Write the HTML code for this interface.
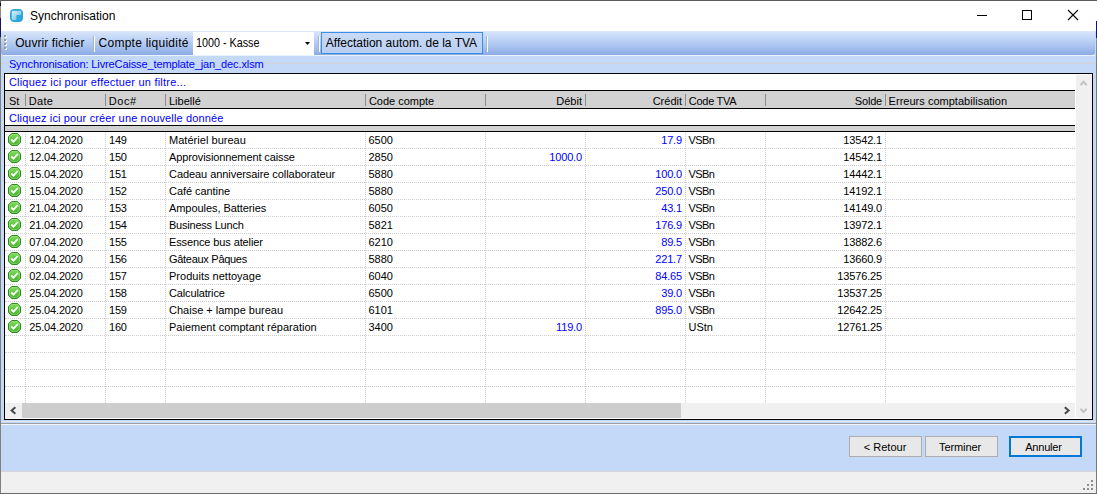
<!DOCTYPE html>
<html><head><meta charset="utf-8"><title>Synchronisation</title>
<style>
*{box-sizing:border-box}
html,body{margin:0;padding:0}
body{width:1097px;height:494px;overflow:hidden;position:relative;background:#fff;font-family:"Liberation Sans",sans-serif;font-size:11px;color:#000}
.a{position:absolute}
.t{position:absolute;white-space:nowrap;height:16px;line-height:16px}
.s12{font-size:12px}
.blue{color:#0000ff}
.hl{position:absolute;left:5px;width:1070px;height:0;border-top:1px dotted #cdcdcd}
.vl{position:absolute;top:132px;width:0;height:271px;border-left:1px dotted #cdcdcd}
.ic{position:absolute;left:8px}
.hs{position:absolute;top:94px;width:1px;height:12px;background:#8c8c8c}
.btn{position:absolute;top:436px;height:21px;border:1px solid #adadad;background:#e8e8e8}
.sep{position:absolute;top:36px;width:2px;height:16px;background:linear-gradient(90deg,#a9b4c8 50%,#fafcff 50%)}
</style></head><body>
<svg width="0" height="0" style="position:absolute"><defs><linearGradient id="gg" x1="0" y1="0" x2="0" y2="1"><stop offset="0" stop-color="#84dc62"/><stop offset=".5" stop-color="#5fc843"/><stop offset="1" stop-color="#49b030"/></linearGradient></defs></svg>
<!-- window frame -->
<div class="a" style="left:0;top:0;width:1097px;height:1px;background:#5c5c5c"></div>
<div class="a" style="left:0;top:0;width:1px;height:494px;background:linear-gradient(#606060 0,#606060 3px,#101010 3px,#101010 6px,#8a8a8a 6px,#8a8a8a 18px,#15155c 18px,#15155c 37px,#808080 37px)"></div>
<div class="a" style="left:1096px;top:1px;width:1px;height:493px;background:linear-gradient(#fff 0,#fff 20px,#15155c 20px,#15155c 37px,#8a94a8 37px,#7a7a7a 60px)"></div>
<div class="a" style="left:0;top:493px;width:1097px;height:1px;background:#6b6b6b"></div>
<!-- title bar -->
<svg class="a" style="left:10.400px;top:8.500px" width="13" height="13" viewBox="0 0 13 13"><defs><linearGradient id="g1" x1="0" y1="0" x2="1" y2="1"><stop offset="0" stop-color="#f2fbfe"/><stop offset=".5" stop-color="#a5dcf2"/><stop offset="1" stop-color="#48b4e2"/></linearGradient></defs><rect x=".5" y=".5" width="12" height="12" rx="3.200" fill="#1f9fd8" stroke="#2ba6dc"/><path d="M1.700 3q0-1.300 1.300-1.300h7q1.300 0 1.300 1.300v3.200h-4.600v5.100h-3.700q-1.300 0-1.300-1.300z" fill="url(#g1)" opacity=".92"/><path d="M6.700 6.200h4.600v3.800q0 1.300-1.300 1.300h-3.300z" fill="#2fa8de"/></svg>
<svg class="a" style="left:960px;top:0" width="137" height="30" viewBox="960 0 137 30"><path d="M977 15.500h10" stroke="#000" stroke-width="1"/><rect x="1022.500" y="10.500" width="9" height="9" fill="none" stroke="#000"/><path d="M1068 10l10 10M1078 10l-10 10" stroke="#000" stroke-width="1.100"/></svg>
<!-- toolbar -->
<div class="a" style="left:1px;top:31px;width:1095px;height:24px;background:#c4d8f8"></div>
<div class="a" style="left:1px;top:31px;width:1094px;height:24px;border-radius:0 0 3px 3px;background:linear-gradient(#dbe7fb 0%,#c6d9f7 25%,#a9c3ef 65%,#8caae3 100%)"></div>
<div class="a" style="left:1px;top:55px;width:1095px;height:18px;background:#c4d8f8"></div>
<div class="a" style="left:3px;top:55px;width:1092px;height:1px;background:#ecf2fd"></div>
<div class="a" style="left:1px;top:63px;width:7px;height:1px;background:#d3d3d6"></div>
<div class="a" style="left:266px;top:63px;width:829px;height:1px;background:#d3d3d6"></div>

<div class="a" style="left:5px;top:36px;width:2px;height:2px;background:#fff"></div><div class="a" style="left:4px;top:35px;width:2px;height:2px;background:#a09a94"></div>
<div class="a" style="left:5px;top:40px;width:2px;height:2px;background:#fff"></div><div class="a" style="left:4px;top:39px;width:2px;height:2px;background:#a09a94"></div>
<div class="a" style="left:5px;top:44px;width:2px;height:2px;background:#fff"></div><div class="a" style="left:4px;top:43px;width:2px;height:2px;background:#a09a94"></div>
<div class="a" style="left:5px;top:48px;width:2px;height:2px;background:#fff"></div><div class="a" style="left:4px;top:47px;width:2px;height:2px;background:#a09a94"></div>
<div id="tb1" class="t s12" style="top:35px;left:15.20px;letter-spacing:0.091px;">Ouvrir fichier</div>
<div class="sep" style="left:93px"></div>
<div id="tb2" class="t s12" style="top:35px;left:98.60px;letter-spacing:0.250px;">Compte liquidité</div>
<div class="a" style="left:193px;top:32px;width:121px;height:23px;background:#fff"></div>
<div id="tb3" class="t s12" style="top:35px;left:196.10px;transform:scaleX(.898);transform-origin:0 0;">1000 - Kasse</div>
<svg class="a" style="left:304px;top:41px" width="7" height="5" viewBox="0 0 7 5"><path d="M1 1h5l-2.500 3z" fill="#000"/></svg>
<div class="sep" style="left:318px"></div>
<div class="a" style="left:321px;top:32px;width:162px;height:22px;border:1px solid #3a8ee6;background:linear-gradient(#c9dbf7,#b9cef1)"></div>
<div id="tb4" class="t s12" style="top:35px;left:325.80px;letter-spacing:-0.005px;">Affectation autom. de la TVA</div>
<div class="sep" style="left:486px"></div>
<div id="ttl" class="t s12" style="top:8px;left:30.00px;">Synchronisation</div>
<div id="sync" class="t blue" style="top:55.5px;left:8.90px;letter-spacing:-0.116px;">Synchronisation: LivreCaisse_template_jan_dec.xlsm</div>
<div class="a" style="left:1px;top:73px;width:1095px;height:350px;background:#c4d8f8"></div>
<div class="a" style="left:4px;top:73px;width:1089px;height:347px;border:1px solid #000;background:#fff"></div>
<div class="a" style="left:5px;top:90px;width:1070px;height:19px;background:#d2d2d2;border-top:1px solid #000;border-bottom:1px solid #000"></div>
<div class="a" style="left:5px;top:125px;width:1070px;height:7px;background:#d2d2d2;border-top:1px solid #000;border-bottom:1px solid #000"></div>

<div id="flt" class="t blue" style="top:74px;left:8.90px;letter-spacing:0.211px;">Cliquez ici pour effectuer un filtre...</div>
<div id="new" class="t blue" style="top:110px;left:8.90px;letter-spacing:0.146px;">Cliquez ici pour créer une nouvelle donnée</div>
<div id="h0" class="t " style="top:93px;left:9.00px;">St</div>
<div id="h1" class="t " style="top:93px;left:28.70px;letter-spacing:0.350px;">Date</div>
<div id="h2" class="t " style="top:93px;left:108.80px;letter-spacing:0.571px;">Doc#</div>
<div id="h3" class="t " style="top:93px;left:169.00px;">Libellé</div>
<div id="h4" class="t " style="top:93px;left:368.90px;letter-spacing:-0.014px;">Code compte</div>
<div id="h5" class="t " style="top:93px;left:282.00px;width:300px;text-align:right;">Débit</div>
<div id="h6" class="t " style="top:93px;left:382.00px;width:300px;text-align:right;">Crédit</div>
<div id="h7" class="t " style="top:93px;left:688.80px;letter-spacing:-0.276px;">Code TVA</div>
<div id="h8" class="t " style="top:93px;left:582.00px;width:300px;text-align:right;letter-spacing:-.2px;">Solde</div>
<div id="h9" class="t " style="top:93px;left:888.60px;letter-spacing:0.022px;">Erreurs comptabilisation</div>
<div class="hs" style="left:25px"></div>
<div class="hs" style="left:105px"></div>
<div class="hs" style="left:165px"></div>
<div class="hs" style="left:365px"></div>
<div class="hs" style="left:485px"></div>
<div class="hs" style="left:585px"></div>
<div class="hs" style="left:685px"></div>
<div class="hs" style="left:765px"></div>
<div class="hs" style="left:885px"></div>
<div class="vl" style="left:25px"></div>
<div class="vl" style="left:105px"></div>
<div class="vl" style="left:165px"></div>
<div class="vl" style="left:365px"></div>
<div class="vl" style="left:485px"></div>
<div class="vl" style="left:585px"></div>
<div class="vl" style="left:685px"></div>
<div class="vl" style="left:765px"></div>
<div class="vl" style="left:885px"></div>
<div class="hl" style="top:148px"></div>
<svg class="ic" style="top:133px" width="13" height="13" viewBox="0 0 13 13"><path d="M3.700 .5h5.600l3.200 3.200v5.600l-3.200 3.200h-5.600l-3.200-3.200v-5.600z" fill="url(#gg)" stroke="#2f8a20" stroke-width="1" stroke-linejoin="round"/><path d="M4.100 1.500h4.800l2.600 2.600v4.800l-2.600 2.600h-4.800l-2.600-2.600v-4.800z" fill="none" stroke="#9be77e" stroke-opacity=".55" stroke-width="1"/><path d="M3.200 6.500l2.300 2.200 4.300-4.700" fill="none" stroke="#fff" stroke-width="1.800"/></svg>
<div id="d0" class="t " style="top:132px;left:29.30px;letter-spacing:-0.162px;">12.04.2020</div>
<div id="n0" class="t " style="top:132px;left:109.10px;letter-spacing:-0.230px;">149</div>
<div id="l0" class="t " style="top:132px;left:169.00px;letter-spacing:0.033px;">Matériel bureau</div>
<div id="c0" class="t " style="top:132px;left:368.60px;letter-spacing:-0.095px;">6500</div>
<div id="cr0" class="t blue" style="top:132px;left:382.00px;width:300px;text-align:right;letter-spacing:-.15px;">17.9</div>
<div id="tv0" class="t " style="top:132px;left:688.60px;letter-spacing:-0.614px;">VSBn</div>
<div id="s0" class="t " style="top:132px;left:582.00px;width:300px;text-align:right;letter-spacing:-.15px;">13542.1</div>
<div class="hl" style="top:165px"></div>
<svg class="ic" style="top:150px" width="13" height="13" viewBox="0 0 13 13"><path d="M3.700 .5h5.600l3.200 3.200v5.600l-3.200 3.200h-5.600l-3.200-3.200v-5.600z" fill="url(#gg)" stroke="#2f8a20" stroke-width="1" stroke-linejoin="round"/><path d="M4.100 1.500h4.800l2.600 2.600v4.800l-2.600 2.600h-4.800l-2.600-2.600v-4.800z" fill="none" stroke="#9be77e" stroke-opacity=".55" stroke-width="1"/><path d="M3.200 6.500l2.300 2.200 4.300-4.700" fill="none" stroke="#fff" stroke-width="1.800"/></svg>
<div id="d1" class="t " style="top:149px;left:29.30px;letter-spacing:-0.162px;">12.04.2020</div>
<div id="n1" class="t " style="top:149px;left:109.10px;letter-spacing:-0.230px;">150</div>
<div id="l1" class="t " style="top:149px;left:169.00px;letter-spacing:-0.105px;">Approvisionnement caisse</div>
<div id="c1" class="t " style="top:149px;left:368.60px;letter-spacing:-0.095px;">2850</div>
<div id="db1" class="t blue" style="top:149px;left:282.00px;width:300px;text-align:right;letter-spacing:-.15px;">1000.0</div>
<div id="s1" class="t " style="top:149px;left:582.00px;width:300px;text-align:right;letter-spacing:-.15px;">14542.1</div>
<div class="hl" style="top:182px"></div>
<svg class="ic" style="top:167px" width="13" height="13" viewBox="0 0 13 13"><path d="M3.700 .5h5.600l3.200 3.200v5.600l-3.200 3.200h-5.600l-3.200-3.200v-5.600z" fill="url(#gg)" stroke="#2f8a20" stroke-width="1" stroke-linejoin="round"/><path d="M4.100 1.500h4.800l2.600 2.600v4.800l-2.600 2.600h-4.800l-2.600-2.600v-4.800z" fill="none" stroke="#9be77e" stroke-opacity=".55" stroke-width="1"/><path d="M3.200 6.500l2.300 2.200 4.300-4.700" fill="none" stroke="#fff" stroke-width="1.800"/></svg>
<div id="d2" class="t " style="top:166px;left:29.30px;letter-spacing:-0.162px;">15.04.2020</div>
<div id="n2" class="t " style="top:166px;left:109.10px;letter-spacing:-0.230px;">151</div>
<div id="l2" class="t " style="top:166px;left:169.00px;letter-spacing:-0.062px;">Cadeau anniversaire collaborateur</div>
<div id="c2" class="t " style="top:166px;left:368.60px;letter-spacing:-0.095px;">5880</div>
<div id="cr2" class="t blue" style="top:166px;left:382.00px;width:300px;text-align:right;letter-spacing:-.15px;">100.0</div>
<div id="tv2" class="t " style="top:166px;left:688.60px;letter-spacing:-0.614px;">VSBn</div>
<div id="s2" class="t " style="top:166px;left:582.00px;width:300px;text-align:right;letter-spacing:-.15px;">14442.1</div>
<div class="hl" style="top:199px"></div>
<svg class="ic" style="top:184px" width="13" height="13" viewBox="0 0 13 13"><path d="M3.700 .5h5.600l3.200 3.200v5.600l-3.200 3.200h-5.600l-3.200-3.200v-5.600z" fill="url(#gg)" stroke="#2f8a20" stroke-width="1" stroke-linejoin="round"/><path d="M4.100 1.500h4.800l2.600 2.600v4.800l-2.600 2.600h-4.800l-2.600-2.600v-4.800z" fill="none" stroke="#9be77e" stroke-opacity=".55" stroke-width="1"/><path d="M3.200 6.500l2.300 2.200 4.300-4.700" fill="none" stroke="#fff" stroke-width="1.800"/></svg>
<div id="d3" class="t " style="top:183px;left:29.30px;letter-spacing:-0.162px;">15.04.2020</div>
<div id="n3" class="t " style="top:183px;left:109.10px;letter-spacing:-0.230px;">152</div>
<div id="l3" class="t " style="top:183px;left:169.00px;letter-spacing:-0.051px;">Café cantine</div>
<div id="c3" class="t " style="top:183px;left:368.60px;letter-spacing:-0.095px;">5880</div>
<div id="cr3" class="t blue" style="top:183px;left:382.00px;width:300px;text-align:right;letter-spacing:-.15px;">250.0</div>
<div id="tv3" class="t " style="top:183px;left:688.60px;letter-spacing:-0.614px;">VSBn</div>
<div id="s3" class="t " style="top:183px;left:582.00px;width:300px;text-align:right;letter-spacing:-.15px;">14192.1</div>
<div class="hl" style="top:216px"></div>
<svg class="ic" style="top:201px" width="13" height="13" viewBox="0 0 13 13"><path d="M3.700 .5h5.600l3.200 3.200v5.600l-3.200 3.200h-5.600l-3.200-3.200v-5.600z" fill="url(#gg)" stroke="#2f8a20" stroke-width="1" stroke-linejoin="round"/><path d="M4.100 1.500h4.800l2.600 2.600v4.800l-2.600 2.600h-4.800l-2.600-2.600v-4.800z" fill="none" stroke="#9be77e" stroke-opacity=".55" stroke-width="1"/><path d="M3.200 6.500l2.300 2.200 4.300-4.700" fill="none" stroke="#fff" stroke-width="1.800"/></svg>
<div id="d4" class="t " style="top:200px;left:29.30px;letter-spacing:-0.162px;">21.04.2020</div>
<div id="n4" class="t " style="top:200px;left:109.10px;letter-spacing:-0.230px;">153</div>
<div id="l4" class="t " style="top:200px;left:169.00px;letter-spacing:-0.063px;">Ampoules, Batteries</div>
<div id="c4" class="t " style="top:200px;left:368.60px;letter-spacing:-0.095px;">6050</div>
<div id="cr4" class="t blue" style="top:200px;left:382.00px;width:300px;text-align:right;letter-spacing:-.15px;">43.1</div>
<div id="tv4" class="t " style="top:200px;left:688.60px;letter-spacing:-0.614px;">VSBn</div>
<div id="s4" class="t " style="top:200px;left:582.00px;width:300px;text-align:right;letter-spacing:-.15px;">14149.0</div>
<div class="hl" style="top:233px"></div>
<svg class="ic" style="top:218px" width="13" height="13" viewBox="0 0 13 13"><path d="M3.700 .5h5.600l3.200 3.200v5.600l-3.200 3.200h-5.600l-3.200-3.200v-5.600z" fill="url(#gg)" stroke="#2f8a20" stroke-width="1" stroke-linejoin="round"/><path d="M4.100 1.500h4.800l2.600 2.600v4.800l-2.600 2.600h-4.800l-2.600-2.600v-4.800z" fill="none" stroke="#9be77e" stroke-opacity=".55" stroke-width="1"/><path d="M3.200 6.500l2.300 2.200 4.300-4.700" fill="none" stroke="#fff" stroke-width="1.800"/></svg>
<div id="d5" class="t " style="top:217px;left:29.30px;letter-spacing:-0.162px;">21.04.2020</div>
<div id="n5" class="t " style="top:217px;left:109.10px;letter-spacing:-0.230px;">154</div>
<div id="l5" class="t " style="top:217px;left:169.00px;letter-spacing:-0.221px;">Business Lunch</div>
<div id="c5" class="t " style="top:217px;left:368.60px;letter-spacing:-0.095px;">5821</div>
<div id="cr5" class="t blue" style="top:217px;left:382.00px;width:300px;text-align:right;letter-spacing:-.15px;">176.9</div>
<div id="tv5" class="t " style="top:217px;left:688.60px;letter-spacing:-0.614px;">VSBn</div>
<div id="s5" class="t " style="top:217px;left:582.00px;width:300px;text-align:right;letter-spacing:-.15px;">13972.1</div>
<div class="hl" style="top:250px"></div>
<svg class="ic" style="top:235px" width="13" height="13" viewBox="0 0 13 13"><path d="M3.700 .5h5.600l3.200 3.200v5.600l-3.200 3.200h-5.600l-3.200-3.200v-5.600z" fill="url(#gg)" stroke="#2f8a20" stroke-width="1" stroke-linejoin="round"/><path d="M4.100 1.500h4.800l2.600 2.600v4.800l-2.600 2.600h-4.800l-2.600-2.600v-4.800z" fill="none" stroke="#9be77e" stroke-opacity=".55" stroke-width="1"/><path d="M3.200 6.500l2.300 2.200 4.300-4.700" fill="none" stroke="#fff" stroke-width="1.800"/></svg>
<div id="d6" class="t " style="top:234px;left:29.30px;letter-spacing:-0.162px;">07.04.2020</div>
<div id="n6" class="t " style="top:234px;left:109.10px;letter-spacing:-0.230px;">155</div>
<div id="l6" class="t " style="top:234px;left:169.00px;letter-spacing:-0.117px;">Essence bus atelier</div>
<div id="c6" class="t " style="top:234px;left:368.60px;letter-spacing:-0.095px;">6210</div>
<div id="cr6" class="t blue" style="top:234px;left:382.00px;width:300px;text-align:right;letter-spacing:-.15px;">89.5</div>
<div id="tv6" class="t " style="top:234px;left:688.60px;letter-spacing:-0.614px;">VSBn</div>
<div id="s6" class="t " style="top:234px;left:582.00px;width:300px;text-align:right;letter-spacing:-.15px;">13882.6</div>
<div class="hl" style="top:267px"></div>
<svg class="ic" style="top:252px" width="13" height="13" viewBox="0 0 13 13"><path d="M3.700 .5h5.600l3.200 3.200v5.600l-3.200 3.200h-5.600l-3.200-3.200v-5.600z" fill="url(#gg)" stroke="#2f8a20" stroke-width="1" stroke-linejoin="round"/><path d="M4.100 1.500h4.800l2.600 2.600v4.800l-2.600 2.600h-4.800l-2.600-2.600v-4.800z" fill="none" stroke="#9be77e" stroke-opacity=".55" stroke-width="1"/><path d="M3.200 6.500l2.300 2.200 4.300-4.700" fill="none" stroke="#fff" stroke-width="1.800"/></svg>
<div id="d7" class="t " style="top:251px;left:29.30px;letter-spacing:-0.162px;">09.04.2020</div>
<div id="n7" class="t " style="top:251px;left:109.10px;letter-spacing:-0.230px;">156</div>
<div id="l7" class="t " style="top:251px;left:169.00px;letter-spacing:-0.289px;">Gâteaux Pâques</div>
<div id="c7" class="t " style="top:251px;left:368.60px;letter-spacing:-0.095px;">5880</div>
<div id="cr7" class="t blue" style="top:251px;left:382.00px;width:300px;text-align:right;letter-spacing:-.15px;">221.7</div>
<div id="tv7" class="t " style="top:251px;left:688.60px;letter-spacing:-0.614px;">VSBn</div>
<div id="s7" class="t " style="top:251px;left:582.00px;width:300px;text-align:right;letter-spacing:-.15px;">13660.9</div>
<div class="hl" style="top:284px"></div>
<svg class="ic" style="top:269px" width="13" height="13" viewBox="0 0 13 13"><path d="M3.700 .5h5.600l3.200 3.200v5.600l-3.200 3.200h-5.600l-3.200-3.200v-5.600z" fill="url(#gg)" stroke="#2f8a20" stroke-width="1" stroke-linejoin="round"/><path d="M4.100 1.500h4.800l2.600 2.600v4.800l-2.600 2.600h-4.800l-2.600-2.600v-4.800z" fill="none" stroke="#9be77e" stroke-opacity=".55" stroke-width="1"/><path d="M3.200 6.500l2.300 2.200 4.300-4.700" fill="none" stroke="#fff" stroke-width="1.800"/></svg>
<div id="d8" class="t " style="top:268px;left:29.30px;letter-spacing:-0.162px;">02.04.2020</div>
<div id="n8" class="t " style="top:268px;left:109.10px;letter-spacing:-0.230px;">157</div>
<div id="l8" class="t " style="top:268px;left:169.00px;letter-spacing:0.016px;">Produits nettoyage</div>
<div id="c8" class="t " style="top:268px;left:368.60px;letter-spacing:-0.095px;">6040</div>
<div id="cr8" class="t blue" style="top:268px;left:382.00px;width:300px;text-align:right;letter-spacing:-.15px;">84.65</div>
<div id="tv8" class="t " style="top:268px;left:688.60px;letter-spacing:-0.614px;">VSBn</div>
<div id="s8" class="t " style="top:268px;left:582.00px;width:300px;text-align:right;letter-spacing:-.15px;">13576.25</div>
<div class="hl" style="top:301px"></div>
<svg class="ic" style="top:286px" width="13" height="13" viewBox="0 0 13 13"><path d="M3.700 .5h5.600l3.200 3.200v5.600l-3.200 3.200h-5.600l-3.200-3.200v-5.600z" fill="url(#gg)" stroke="#2f8a20" stroke-width="1" stroke-linejoin="round"/><path d="M4.100 1.500h4.800l2.600 2.600v4.800l-2.600 2.600h-4.800l-2.600-2.600v-4.800z" fill="none" stroke="#9be77e" stroke-opacity=".55" stroke-width="1"/><path d="M3.200 6.500l2.300 2.200 4.300-4.700" fill="none" stroke="#fff" stroke-width="1.800"/></svg>
<div id="d9" class="t " style="top:285px;left:29.30px;letter-spacing:-0.162px;">25.04.2020</div>
<div id="n9" class="t " style="top:285px;left:109.10px;letter-spacing:-0.230px;">158</div>
<div id="l9" class="t " style="top:285px;left:169.00px;letter-spacing:-0.143px;">Calculatrice</div>
<div id="c9" class="t " style="top:285px;left:368.60px;letter-spacing:-0.095px;">6500</div>
<div id="cr9" class="t blue" style="top:285px;left:382.00px;width:300px;text-align:right;letter-spacing:-.15px;">39.0</div>
<div id="tv9" class="t " style="top:285px;left:688.60px;letter-spacing:-0.614px;">VSBn</div>
<div id="s9" class="t " style="top:285px;left:582.00px;width:300px;text-align:right;letter-spacing:-.15px;">13537.25</div>
<div class="hl" style="top:318px"></div>
<svg class="ic" style="top:303px" width="13" height="13" viewBox="0 0 13 13"><path d="M3.700 .5h5.600l3.200 3.200v5.600l-3.200 3.200h-5.600l-3.200-3.200v-5.600z" fill="url(#gg)" stroke="#2f8a20" stroke-width="1" stroke-linejoin="round"/><path d="M4.100 1.500h4.800l2.600 2.600v4.800l-2.600 2.600h-4.800l-2.600-2.600v-4.800z" fill="none" stroke="#9be77e" stroke-opacity=".55" stroke-width="1"/><path d="M3.200 6.500l2.300 2.200 4.300-4.700" fill="none" stroke="#fff" stroke-width="1.800"/></svg>
<div id="d10" class="t " style="top:302px;left:29.30px;letter-spacing:-0.162px;">25.04.2020</div>
<div id="n10" class="t " style="top:302px;left:109.10px;letter-spacing:-0.230px;">159</div>
<div id="l10" class="t " style="top:302px;left:169.00px;letter-spacing:0.003px;">Chaise + lampe bureau</div>
<div id="c10" class="t " style="top:302px;left:368.60px;letter-spacing:-0.095px;">6101</div>
<div id="cr10" class="t blue" style="top:302px;left:382.00px;width:300px;text-align:right;letter-spacing:-.15px;">895.0</div>
<div id="tv10" class="t " style="top:302px;left:688.60px;letter-spacing:-0.614px;">VSBn</div>
<div id="s10" class="t " style="top:302px;left:582.00px;width:300px;text-align:right;letter-spacing:-.15px;">12642.25</div>
<div class="hl" style="top:335px"></div>
<svg class="ic" style="top:320px" width="13" height="13" viewBox="0 0 13 13"><path d="M3.700 .5h5.600l3.200 3.200v5.600l-3.200 3.200h-5.600l-3.200-3.200v-5.600z" fill="url(#gg)" stroke="#2f8a20" stroke-width="1" stroke-linejoin="round"/><path d="M4.100 1.500h4.800l2.600 2.600v4.800l-2.600 2.600h-4.800l-2.600-2.600v-4.800z" fill="none" stroke="#9be77e" stroke-opacity=".55" stroke-width="1"/><path d="M3.200 6.500l2.300 2.200 4.300-4.700" fill="none" stroke="#fff" stroke-width="1.800"/></svg>
<div id="d11" class="t " style="top:319px;left:29.30px;letter-spacing:-0.162px;">25.04.2020</div>
<div id="n11" class="t " style="top:319px;left:109.10px;letter-spacing:-0.230px;">160</div>
<div id="l11" class="t " style="top:319px;left:169.00px;letter-spacing:0.012px;">Paiement comptant réparation</div>
<div id="c11" class="t " style="top:319px;left:368.60px;letter-spacing:-0.095px;">3400</div>
<div id="db11" class="t blue" style="top:319px;left:282.00px;width:300px;text-align:right;letter-spacing:-.15px;">119.0</div>
<div id="tv11" class="t " style="top:319px;left:688.60px;letter-spacing:-0.023px;">UStn</div>
<div id="s11" class="t " style="top:319px;left:582.00px;width:300px;text-align:right;letter-spacing:-.15px;">12761.25</div>
<div class="hl" style="top:352px"></div>
<div class="hl" style="top:369px"></div>
<div class="hl" style="top:386px"></div>
<div class="a" style="left:5px;top:403px;width:1070px;height:15px;background:#f0f0f0"></div>
<div class="a" style="left:22px;top:403px;width:659px;height:15px;background:#cdcdcd"></div>
<div class="a" style="left:5px;top:418px;width:1087px;height:1px;background:#fff"></div>
<div class="a" style="left:1075px;top:74px;width:1px;height:345px;background:#fff"></div>
<div class="a" style="left:1076px;top:75px;width:16px;height:343px;background:#f0f0f0"></div>
<svg class="a" style="left:0;top:400px" width="1097" height="20" viewBox="0 400 1097 20"><path d="M15.400 407.200l-3.800 3.300 3.800 3.300" fill="none" stroke="#484848" stroke-width="2"/><path d="M1064.800 407.200l3.800 3.300-3.800 3.300" fill="none" stroke="#484848" stroke-width="2"/><path d="M1080.500 408.700l3.100 3.300 3.100-3.300" fill="none" stroke="#c2c2c2" stroke-width="2"/></svg>
<svg class="a" style="left:1075px;top:74px" width="17" height="20" viewBox="1075 74 17 20"><path d="M1080.500 85.200l3.100-3.400 3.100 3.400" fill="none" stroke="#c2c2c2" stroke-width="2"/></svg>

<div class="a" style="left:1px;top:420px;width:1095px;height:51px;background:#c4d8f8"></div>
<div class="a" style="left:1px;top:421px;width:1095px;height:1px;background:#e2e4ea"></div>
<div class="a" style="left:1px;top:423px;width:1095px;height:1px;background:#9a9ea6"></div>
<div class="a" style="left:1px;top:424px;width:1095px;height:1px;background:#f4f7fd"></div>
<div class="a" style="left:1px;top:471px;width:1095px;height:22px;background:#f0f0f0"></div>
<div class="a" style="left:1px;top:471px;width:1095px;height:1px;background:#d7d7d7"></div>
<div class="btn" style="left:849px;width:73px"></div>
<div class="btn" style="left:925px;width:73px"></div>
<div class="btn" style="left:1009px;width:73px;border:2px solid #0078d7"></div>

<div id="b1" class="t " style="top:439px;left:863.80px;">&lt; Retour</div>
<div id="b2" class="t " style="top:439px;left:939.00px;letter-spacing:-0.100px;">Terminer</div>
<div id="b3" class="t " style="top:439px;left:1025.20px;letter-spacing:-0.204px;">Annuler</div>
<div class="a" style="left:1091px;top:480px;width:2px;height:2px;background:#8e8e8e"></div>
<div class="a" style="left:1087px;top:484px;width:2px;height:2px;background:#8e8e8e"></div>
<div class="a" style="left:1091px;top:484px;width:2px;height:2px;background:#8e8e8e"></div>
<div class="a" style="left:1083px;top:488px;width:2px;height:2px;background:#8e8e8e"></div>
<div class="a" style="left:1087px;top:488px;width:2px;height:2px;background:#8e8e8e"></div>
<div class="a" style="left:1091px;top:488px;width:2px;height:2px;background:#8e8e8e"></div>
</body></html>
